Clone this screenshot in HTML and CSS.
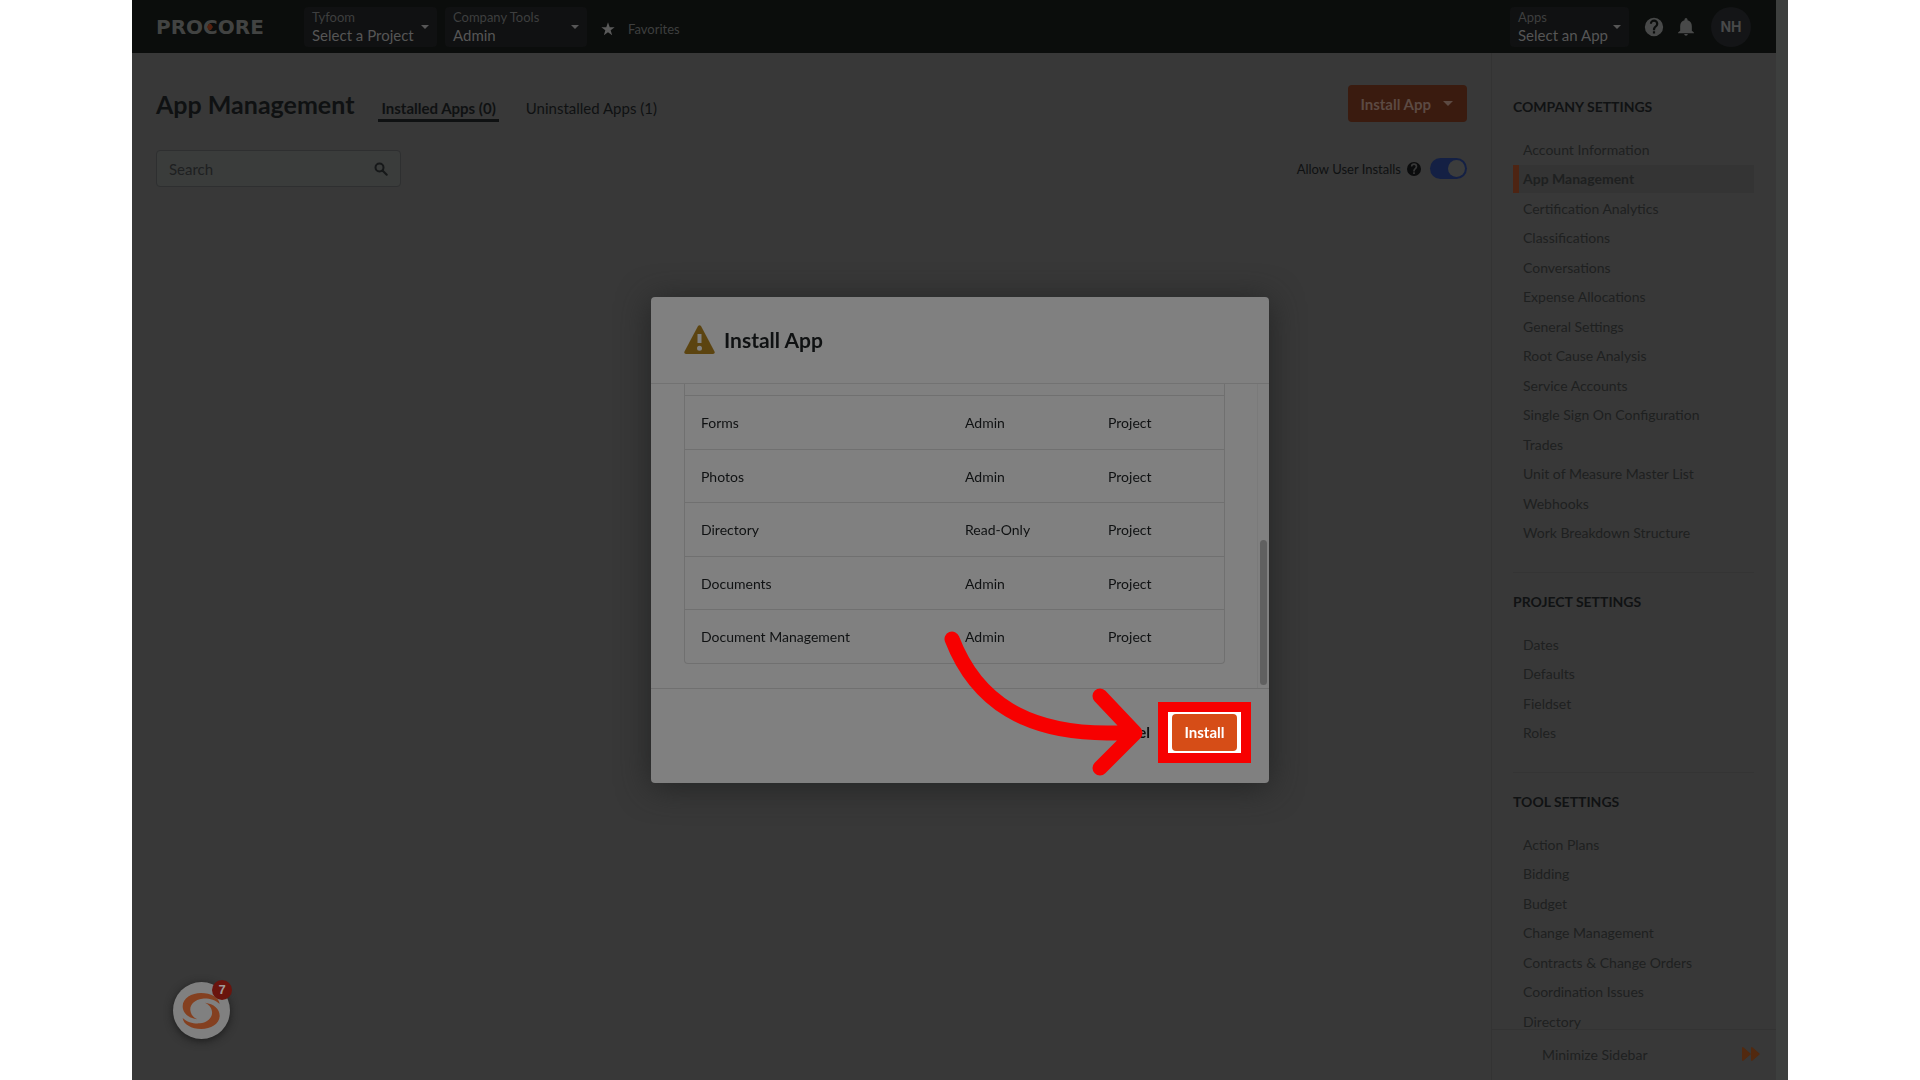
FILE: index.html
```html
<!DOCTYPE html>
<html lang="en">
<head>
<meta charset="utf-8">
<meta name="viewport" content="width=device-width, initial-scale=1">
<title>App Management</title>
<link rel="stylesheet" href="styles.css">
</head>
<body>
<div class="stage">
  <div class="app">
    <header class="topbar">
      <a class="logo" href="#">PROCORE<svg class="logo-dot" viewBox="0 0 6 6" aria-hidden="true"><path d="M2 0h2l2 3-2 3H2L0 3z"/></svg></a>
      <button class="picker picker-project"><span class="picker-text"><small>Tyfoom</small><span>Select a Project</span></span><i class="caret"></i></button>
      <button class="picker picker-tool"><span class="picker-text"><small>Company Tools</small><span>Admin</span></span><i class="caret"></i></button>
      <a class="favorites" href="#"><svg viewBox="0 0 24 24" width="16" height="16" aria-hidden="true"><path d="M12 2l2.600 7.200h7.400l-6 4.600 2.200 7.400L12 16.800l-6.200 4.400L8 13.800 2 9.200h7.400z"/></svg>Favorites</a>
      <button class="picker picker-app"><span class="picker-text"><small>Apps</small><span>Select an App</span></span><i class="caret"></i></button>
      <button class="icon-button" aria-label="Help"><svg viewBox="0 0 24 24" width="22" height="22"><path d="M12 2a10 10 0 1 0 0 20 10 10 0 0 0 0-20zm1.200 17h-2.400v-2.400h2.400zm2.500-7.700l-1.100 1.100c-.9.900-1.400 1.600-1.400 3.100h-2.400v-.6c0-1.300.5-2.500 1.400-3.400l1.500-1.500c.4-.4.6-.9.600-1.500a2.300 2.300 0 0 0-4.600 0H7.500a4.600 4.600 0 0 1 9.200 0c0 1.100-.4 2.100-1 2.800z"/></svg></button>
      <button class="icon-button" aria-label="Notifications"><svg viewBox="0 0 24 24" width="20" height="20"><path d="M12 22.500a2.200 2.200 0 0 0 2.200-2H9.800a2.200 2.200 0 0 0 2.200 2zM19 16.500V11c0-3.400-2-6.200-5.200-7V3a1.800 1.800 0 0 0-3.600 0v1C7 4.800 5 7.600 5 11v5.500l-2.500 2v1h19v-1z"/></svg></button>
      <button class="avatar">NH</button>
    </header>
    <div class="columns">
      <main class="main">
        <div class="title-row">
          <h1>App Management</h1>
          <nav class="tabs">
            <a class="tab tab-active" href="#">Installed Apps (0)</a>
            <a class="tab" href="#">Uninstalled Apps (1)</a>
          </nav>
          <button class="install-app">Install App<i class="caret caret-large"></i></button>
        </div>
        <div class="filter-row">
          <div class="search">
            <input type="text" placeholder="Search" aria-label="Search">
            <svg viewBox="0 0 14 14" width="14" height="14" aria-hidden="true"><circle cx="5.500" cy="5.500" r="4"/><path d="M8.500 8.500l4.200 4.200"/></svg>
          </div>
          <div class="allow">
            <label for="allow">Allow User Installs</label>
            <svg viewBox="2 2 20 20" width="14" height="14" aria-hidden="true"><path d="M12 2a10 10 0 1 0 0 20 10 10 0 0 0 0-20zm1.200 17h-2.400v-2.400h2.400zm2.500-7.700l-1.100 1.100c-.9.900-1.400 1.600-1.400 3.100h-2.400v-.6c0-1.300.5-2.500 1.400-3.400l1.500-1.500c.4-.4.6-.9.600-1.500a2.300 2.300 0 0 0-4.600 0H7.500a4.600 4.600 0 0 1 9.200 0c0 1.100-.4 2.100-1 2.800z"/></svg>
            <input class="toggle" id="allow" type="checkbox" checked>
          </div>
        </div>
      </main>
      <aside class="sidebar">
        <div class="sections">
          <section>
            <h2>COMPANY SETTINGS</h2>
            <ul>
              <li><a href="#">Account Information</a></li>
              <li><a class="current" href="#">App Management</a></li>
              <li><a href="#">Certification Analytics</a></li>
              <li><a href="#">Classifications</a></li>
              <li><a href="#">Conversations</a></li>
              <li><a href="#">Expense Allocations</a></li>
              <li><a href="#">General Settings</a></li>
              <li><a href="#">Root Cause Analysis</a></li>
              <li><a href="#">Service Accounts</a></li>
              <li><a href="#">Single Sign On Configuration</a></li>
              <li><a href="#">Trades</a></li>
              <li><a href="#">Unit of Measure Master List</a></li>
              <li><a href="#">Webhooks</a></li>
              <li><a href="#">Work Breakdown Structure</a></li>
            </ul>
          </section>
          <section>
            <h2>PROJECT SETTINGS</h2>
            <ul>
              <li><a href="#">Dates</a></li>
              <li><a href="#">Defaults</a></li>
              <li><a href="#">Fieldset</a></li>
              <li><a href="#">Roles</a></li>
            </ul>
          </section>
          <section>
            <h2>TOOL SETTINGS</h2>
            <ul>
              <li><a href="#">Action Plans</a></li>
              <li><a href="#">Bidding</a></li>
              <li><a href="#">Budget</a></li>
              <li><a href="#">Change Management</a></li>
              <li><a href="#">Contracts &amp; Change Orders</a></li>
              <li><a href="#">Coordination Issues</a></li>
              <li><a href="#">Directory</a></li>
            </ul>
          </section>
        </div>
        <button class="minimize">Minimize Sidebar<svg viewBox="0 0 18 14" width="18" height="14" aria-hidden="true"><path d="M1 0l8 7-8 7q-1 0-1-1V1q0-1 1-1zM10 0l8 7-8 7q-1 0-1-1V1q0-1 1-1z"/></svg></button>
      </aside>
    </div>
    <button class="chat" aria-label="Messages">
      <svg viewBox="24 30 171 171" aria-hidden="true"><path id="swirl" d="M97 142C70 138 53 124 53 103 53 78 80 63 108 63c30 0 54 14 56 33-14-14-36-18-52-16-24 3-38 18-36 35 1 13 10 22 21 27z"/><use href="#swirl" transform="rotate(180 108.500 117)"/></svg>
      <span class="badge">7</span>
    </button>
  </div>
</div>
<div class="modal-layer">
  <div class="modal" role="dialog" aria-labelledby="modal-title">
    <header class="modal-head">
      <svg viewBox="0 0 31 29" width="31" height="29" aria-hidden="true"><path class="sign" d="M14 1q1.500-1.600 3 0L30.500 26.500q.8 2-1.500 2.500H2q-2.300-.5-1.500-2.500z"/><path class="mark" d="M13.500 9h4v9h-4zM13 23.300a2.500 2.500 0 1 0 5 0 2.500 2.500 0 1 0-5 0z"/></svg>
      <h2 id="modal-title">Install App</h2>
    </header>
    <div class="modal-body">
      <div class="scroll-area">
        <table>
          <tbody>
            <tr class="cut"><td></td><td></td><td></td></tr>
            <tr><td>Forms</td><td>Admin</td><td>Project</td></tr>
            <tr><td>Photos</td><td>Admin</td><td>Project</td></tr>
            <tr><td>Directory</td><td>Read-Only</td><td>Project</td></tr>
            <tr><td>Documents</td><td>Admin</td><td>Project</td></tr>
            <tr><td>Document Management</td><td>Admin</td><td>Project</td></tr>
          </tbody>
        </table>
      </div>
      <div class="track"><div class="thumb"></div></div>
    </div>
    <footer class="modal-foot">
      <button class="cancel">Cancel</button>
      <div class="highlight"><button class="install">Install</button></div>
    </footer>
    <svg class="arrow" viewBox="944 631 200 145" width="200" height="145" aria-hidden="true"><path d="M952 639C974 696 1022 740 1132 732M1100 696l35 37-35 35"/></svg>
  </div>
</div>
</body>
</html>
```
FILE: styles.css
```css
* { box-sizing: border-box; }

body {
  margin: 0;
  background: #fff;
  color: #0f1112;
  font-family: Lato, "Open Sans", sans-serif;
  font-size: 14px;
}

button, input { font: inherit; color: inherit; }
button { border: 0; padding: 0; background: none; }
a { color: inherit; text-decoration: none; }
h1, h2, ul { margin: 0; padding: 0; }
ul { list-style: none; }

.stage {
  width: 86.25%;
  height: 100vh;
  margin: 0 auto;
  padding-right: 12px;
  background: #3d3f3e;
}

.app {
  position: relative;
  display: flex;
  flex-direction: column;
  height: 100%;
  background: #383838;
}

/* Top bar */
.topbar {
  display: flex;
  align-items: center;
  height: 53px;
  padding: 0 25px 0 24px;
  background: #0b0d0c;
  color: #565656;
}

.logo {
  position: relative;
  width: 148px;
  color: #424342;
  font: bold 20px/24px "DejaVu Sans", sans-serif;
}

.logo-dot {
  position: absolute;
  left: 51px;
  top: 9px;
  width: 6px;
  height: 6px;
  fill: #54200f;
}

.picker {
  display: flex;
  align-items: center;
  justify-content: space-between;
  height: 40px;
  padding: 0 8px;
  border-radius: 4px;
  background: #101112;
  text-align: left;
}

.picker-project { width: 133px; margin-right: 8px; }
.picker-tool { width: 142px; margin-right: 13px; }
.picker-app { width: 119px; margin: 0 14px 0 auto; }

.picker-text {
  display: flex;
  flex-direction: column;
  padding-bottom: 2px;
  font-size: 15px;
  line-height: 18px;
  white-space: nowrap;
}

.picker-text small { color: #3e3f3f; font-size: 13px; }

.caret {
  border: 4px solid transparent;
  border-top-color: currentColor;
  border-bottom: 0;
}

.caret-large { border-width: 5px 5px 0; }

.favorites {
  display: flex;
  align-items: center;
  gap: 12px;
  padding-top: 4px;
  color: #3e3f3f;
  font-size: 13px;
}

.favorites svg { fill: #5a5a5a; }

.icon-button {
  display: grid;
  place-items: center;
  width: 22px;
  margin-right: 10px;
}

.icon-button svg { fill: #484949; }

.avatar {
  width: 40px;
  height: 40px;
  margin-left: 4px;
  border-radius: 50%;
  background: #141517;
  color: #484949;
  font: bold 14px Inter, sans-serif;
}

/* Page columns */
.columns {
  display: flex;
  flex: 1;
  min-height: 0;
}

.main {
  flex: 1;
  padding: 32px 24px;
}

.title-row {
  display: flex;
  align-items: center;
  height: 37px;
}

h1 { font-size: 25px; line-height: 32px; }

.tabs {
  display: flex;
  gap: 24px;
  margin: 8px 0 0 24px;
}

.tab {
  padding: 4px 3px 0;
  border-bottom: 3px solid transparent;
  font-size: 15px;
  line-height: 22px;
}

.tab-active {
  border-color: #0f1112;
  font-weight: bold;
}

.install-app {
  display: flex;
  align-items: center;
  gap: 12px;
  height: 37px;
  margin-left: auto;
  padding: 0 14px 0 12px;
  border-radius: 4px;
  background: #3a1b0f;
  color: #5c4a43;
  font-size: 15px;
  font-weight: bold;
}

.filter-row {
  display: flex;
  align-items: center;
  justify-content: space-between;
  margin-top: 28px;
}

.search {
  display: flex;
  align-items: center;
  width: 245px;
  height: 37px;
  padding: 0 12px;
  border: 1px solid #2e2f30;
  border-radius: 4px;
  background: #3a3c3b;
  font-size: 15px;
}

.search input {
  flex: 1;
  min-width: 0;
  padding: 0;
  border: 0;
  outline: 0;
  background: none;
}

.search input::placeholder { color: #1e2021; opacity: 1; }
.search svg { fill: none; stroke: #161819; stroke-width: 2; stroke-linecap: round; }

.allow { display: flex; align-items: center; font-size: 13px; }
.allow svg { margin: 0 9px 0 6px; fill: #0b0c0d; }

.toggle {
  display: flex;
  justify-content: flex-end;
  width: 37px;
  height: 21px;
  margin: 0;
  padding: 2px;
  border-radius: 11px;
  background: #142044;
  appearance: none;
}

.toggle::before {
  content: "";
  width: 17px;
  height: 17px;
  border-radius: 50%;
  background: #3b3c3c;
}

/* Settings sidebar */
.sidebar {
  display: flex;
  flex-direction: column;
  width: 285px;
  border-left: 1px solid #333;
  color: #1e2020;
}

.sections {
  flex: 1;
  min-height: 0;
  padding: 25px 22px 0 21px;
  overflow: hidden;
}

section {
  padding: 15px 0 23px;
  border-bottom: 1px solid #343434;
}

.sections section:last-child { border-bottom: 0; }

section h2 {
  margin-bottom: 15px;
  color: #101213;
  font-size: 14px;
  line-height: 28px;
}

li { height: 29px; }
li:nth-child(even) { height: 30px; }

li a {
  display: block;
  padding-left: 10px;
  line-height: 28px;
}

.current {
  padding-left: 4px;
  border-left: 6px solid #4d2413;
  background: #343434;
  font-weight: bold;
}

.minimize {
  display: flex;
  align-items: center;
  justify-content: space-between;
  height: 51px;
  padding: 0 16px 2px 50px;
  border-top: 1px solid #333;
}

.minimize svg { fill: #52290f; }

/* Chat launcher */
.chat {
  position: absolute;
  left: 41px;
  bottom: 41px;
  width: 57px;
  height: 57px;
  border-radius: 50%;
  background: #808080;
  box-shadow: 0 2px 8px #1c1c1c;
}

.chat svg { display: block; width: 57px; height: 57px; fill: #844020; }

.badge {
  position: absolute;
  right: -2px;
  top: -2px;
  width: 20px;
  height: 20px;
  border-radius: 50%;
  background: #6a140d;
  color: #a09a99;
  font: bold 13px/20px "Liberation Sans", sans-serif;
}

/* Install dialog */
.modal-layer {
  position: fixed;
  inset: 0;
  display: grid;
  place-items: center;
}

.modal {
  position: relative;
  width: 618px;
  border-radius: 4px;
  background: #808080;
  box-shadow: 0 4px 32px #232424;
}

.modal-head {
  display: flex;
  align-items: center;
  gap: 9px;
  height: 87px;
  padding: 0 33px 2px;
  border-bottom: 1px solid #727272;
}

.modal-head h2 { font-size: 21px; }
.sign { fill: #5c4410; }
.mark { fill: #808080; }

.modal-body {
  display: flex;
  height: 304px;
}

.scroll-area {
  flex: 1;
  padding: 0 33px;
  overflow: hidden;
}

table {
  width: 541px;
  border: 1px solid #707070;
  border-top: 0;
  border-radius: 0 0 4px 4px;
  border-spacing: 0;
  table-layout: fixed;
}

td {
  height: 54px;
  padding: 0 16px;
  border-top: 1px solid #707070;
}

tr:nth-child(odd) td { height: 53px; }
tr.cut td { height: 11px; border-top: 0; }
td:nth-child(1) { width: 264px; }
td:nth-child(2) { width: 143px; }

.track {
  width: 12px;
  padding: 156px 2px 3px;
  border-left: 1px solid #7a7a7a;
}

.thumb {
  height: 145px;
  border-radius: 4px;
  background: #606060;
}

.modal-foot {
  display: flex;
  align-items: center;
  justify-content: flex-end;
  gap: 8px;
  height: 95px;
  padding: 0 18px 8px 0;
  border-top: 1px solid #707070;
  font-size: 15px;
}

.cancel { font-weight: bold; }

.highlight {
  padding: 2px 4px;
  border: 10px solid #f70000;
  background: #fff;
}

.install {
  display: block;
  width: 65px;
  height: 37px;
  border-radius: 4px;
  background: #d64d17;
  color: #fff;
  font-weight: bold;
}

.arrow {
  position: absolute;
  left: 293px;
  top: 334px;
  fill: none;
  stroke: #f70000;
  stroke-width: 15;
  stroke-linecap: round;
  stroke-linejoin: round;
}
```
